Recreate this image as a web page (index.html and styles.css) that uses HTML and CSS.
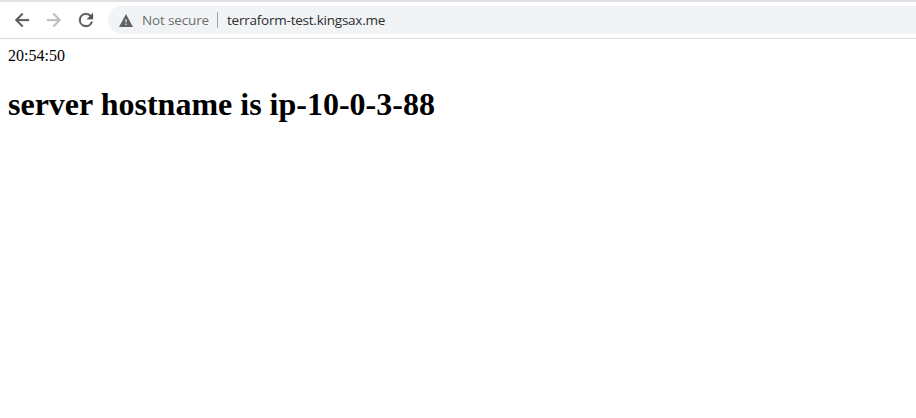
FILE: index.html
```html
<!DOCTYPE html>
<html lang="en">
<head>
<meta charset="utf-8">
<title>terraform-test.kingsax.me</title>
<link rel="stylesheet" href="styles.css">
</head>
<body>
<header class="toolbar">
  <nav class="nav">
    <svg class="icon" viewBox="4 4 16 16"><path d="M20 11H7.83l5.59-5.59L12 4l-8 8 8 8 1.41-1.41L7.83 13H20v-2z"/></svg>
    <svg class="icon icon-disabled" viewBox="4 4 16 16"><path d="M12 4l-1.41 1.41L16.17 11H4v2h12.17l-5.58 5.59L12 20l8-8z"/></svg>
    <svg class="icon" viewBox="4 4 16 16"><path d="M17.65 6.35A7.96 7.96 0 0 0 12 4a8 8 0 1 0 7.73 10h-2.08A6 6 0 1 1 12 6c1.66 0 3.14.69 4.22 1.78L13 11h7V4l-2.35 2.35z"/></svg>
  </nav>
  <div class="address">
    <svg class="warning" viewBox="1 2 22 19" preserveAspectRatio="none"><path d="M1 21h22L12 2 1 21zm12-3h-2v-2h2v2zm0-4h-2v-4h2v4z"/></svg>
    <span class="security">Not secure</span>
    <span class="divider"></span>
    <span class="url">terraform-test.kingsax.me</span>
  </div>
</header>
<main class="page">
  <div class="time">20:54:50</div>
  <h1 class="host">server hostname is ip-10-0-3-88</h1>
</main>
</body>
</html>
```
FILE: styles.css
```css
* { box-sizing: border-box; }
body {
  margin: 0;
  background: #fff;
  color: #000;
  overflow: hidden;
}
.toolbar {
  display: flex;
  height: 39px;
  padding: 4px 0 4px 15px;
  border-top: 2px solid #dee1e6;
  border-bottom: 1px solid #d8d9db;
}
.nav {
  display: flex;
  align-items: center;
  gap: 18px;
  width: 93px;
  height: 28px;
}
.icon {
  width: 14px;
  height: 14px;
  overflow: visible;
  fill: #55585c;
  stroke: #55585c;
  stroke-width: 0.35;
}
.icon-disabled {
  fill: #babcbe;
  stroke: #babcbe;
}
.address {
  display: flex;
  flex: 1;
  align-items: center;
  height: 28px;
  padding-left: 11px;
  border-radius: 14px 0 0 14px;
  background: #f1f3f4;
  font: 13.5px/20px "Open Sans", "Noto Sans", sans-serif;
  white-space: nowrap;
}
.warning {
  width: 14px;
  height: 13px;
  margin-right: 9px;
  fill: #5f6368;
}
.security {
  width: 75px;
  color: #6b6f73;
  letter-spacing: -0.15px;
}
.divider {
  width: 1px;
  height: 16px;
  margin-right: 9px;
  background: #9fa2a6;
}
.url {
  color: #2b2e32;
  letter-spacing: -0.23px;
}
.page {
  padding: 8px;
  font-family: "Liberation Serif", serif;
}
.time {
  font-size: 16px;
  line-height: 18px;
}
.host {
  margin: 21px 0 0;
  font-size: 32px;
  line-height: 36px;
}
```
